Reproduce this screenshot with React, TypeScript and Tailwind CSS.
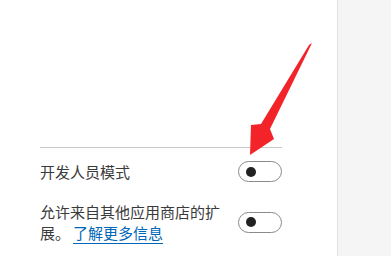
import React from 'react';

function Toggle() {
  return (
    <div className="w-[44px] h-[21px] rounded-full border border-[#8a8a8a] bg-white flex items-center pl-[7px] shrink-0">
      <div className="w-[10px] h-[10px] rounded-full bg-[#222]" />
    </div>
  );
}

export default function App() {
  return (
    <div
      className="relative w-[391px] h-[256px] flex overflow-hidden bg-white text-[#3a3a3a]"
      style={{ fontFamily: '"Noto Sans CJK SC", "Noto Sans", sans-serif' }}
    >
      {/* Settings panel */}
      <div className="w-[337px] bg-white pl-[40px] pt-[147px]">
        <div className="w-[242px] h-px bg-[#c8c8c8]" />

        <div className="w-[242px] flex items-center justify-between mt-[13px]">
          <span className="text-[15px] leading-[21px]">开发人员模式</span>
          <Toggle />
        </div>

        <div className="w-[242px] flex items-center justify-between mt-[19px]">
          <p className="w-[190px] text-[15px] leading-[21px]">
            允许来自其他应用商店的扩展。
            <a className="ml-[3px] text-[#0067b8] underline underline-offset-[4px] decoration-[#0067b8]">了解更多信息</a>
          </p>
          <Toggle />
        </div>
      </div>

      {/* Side pane */}
      <div className="flex-1 border-l border-[#e2e2e2] bg-[#f5f5f5]" />

      {/* Red arrow annotation */}
      <svg className="absolute left-0 top-0 pointer-events-none" width="391" height="256">
        <polygon
          points="312,43 270,129 274,139 250,155 251,125 261,124 309,45"
          fill="#f2242a"
        />
      </svg>
    </div>
  );
}
